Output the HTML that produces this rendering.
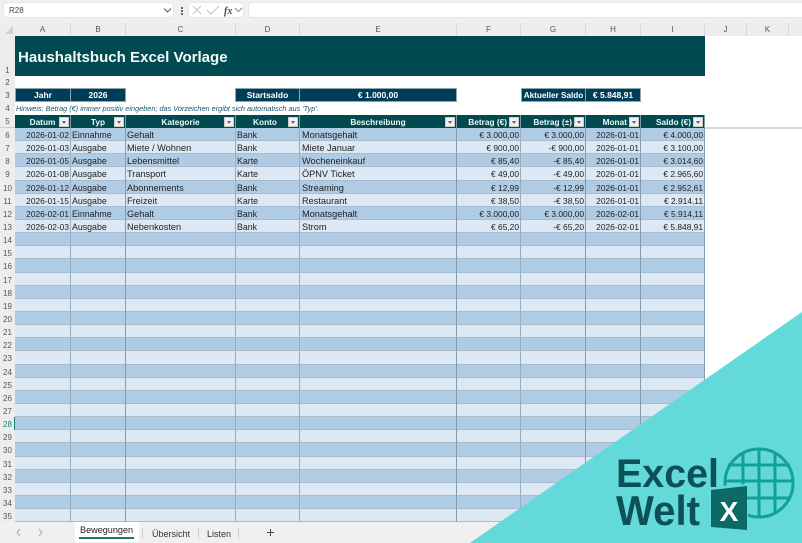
<!DOCTYPE html>
<html lang="de"><head><meta charset="utf-8"><title>Haushaltsbuch Excel Vorlage</title>
<style>
*{box-sizing:border-box}
html,body{margin:0;padding:0;background:#fff}
#p{position:relative;width:802px;height:543px;overflow:hidden;background:#fff;font-family:"Liberation Sans",sans-serif;color:#222;filter:blur(.3px)}
.abs{position:absolute}
.box{position:absolute;background:#fff;border-radius:4px;border:1px solid #e6e6e6}
.ch{position:absolute;top:23px;height:13px;background:#ededed;border-right:1px solid #d8d8d8;font-size:8px;line-height:14px;text-align:center;color:#555}
.rn{position:absolute;left:0;width:15px;text-align:center;font-size:8px;color:#555;background:#ededed}
.nv{position:absolute;background:#003d58;color:#fff;font-weight:bold;font-size:8.5px;text-align:center;border:1px solid #8fa3b0;line-height:13px}
.hd{position:absolute;top:115px;height:13px;background:#014a50;color:#f2f7f7;font-weight:bold;font-size:8.3px;line-height:14px;text-align:center;border-right:1px solid #7d9aa0}
.hd i{position:absolute;right:1px;top:1.5px;width:10px;height:10px;background:#f1f1f1;border:1px solid #ccc}
.hd i:after{content:"";position:absolute;left:2px;top:3px;border:2.2px solid transparent;border-top:3px solid #666;border-bottom:0}
#rows{position:absolute;left:0;top:128px;width:705px;height:394px;display:flex;flex-direction:column}
.r{flex:1;position:relative;font-size:8.4px;line-height:13px;white-space:nowrap;border-bottom:1px solid #a9bccd;margin-left:0}
.r>b{position:absolute;left:0;top:0;bottom:-1px;width:15px;background:#ededed;font-weight:normal;font-size:8px;line-height:15px;text-align:center;color:#555;z-index:2}
.o{background:#b0cbe4}.e{background:#dce8f3}
.r span{position:absolute;top:1px;color:#222}
.A{left:15px;width:54px;text-align:right}
.B{left:72px;font-size:8.8px}
.C{left:127px;font-size:9.2px}
.D{left:237px;font-size:8.8px}
.E{left:302px;font-size:9.2px}
.F{left:456px;width:63px;text-align:right}
.G{left:520px;width:64px;text-align:right}
.H{left:585px;width:54px;text-align:right}
.I{left:640px;width:63px;text-align:right}
.v{position:absolute;top:128px;height:394px;width:1px;background:#98aec0}
.tab{position:absolute;top:529px;font-size:9px;color:#333;line-height:11px}
.sep{position:absolute;top:528px;width:1px;height:11px;background:#ccc}
</style></head><body><div id="p">

<!-- toolbar -->
<div class="abs" style="left:0;top:0;width:802px;height:23px;background:#f0f0f0"></div>
<div class="box" style="left:3px;top:2px;width:171px;height:16px;font-size:8px;line-height:15px;padding-left:5px;color:#444">R28</div>
<svg class="abs" style="left:163px;top:7px" width="9" height="7"><path d="M1 1.5 L4.5 5 L8 1.5" fill="none" stroke="#555" stroke-width="1"/></svg>
<div class="abs" style="left:181px;top:7px;width:2px;height:2px;background:#666;box-shadow:0 3px 0 #666,0 6px 0 #666"></div>
<div class="box" style="left:188px;top:2px;width:56px;height:16px"></div>
<svg class="abs" style="left:190px;top:3px" width="54" height="15">
<path d="M3 3 L11 11 M11 3 L3 11" stroke="#c4c4c4" stroke-width="1" fill="none"/>
<path d="M17 7 L21 11 L29 3" stroke="#c4c4c4" stroke-width="1" fill="none"/>
<text x="34" y="11" font-family="Liberation Serif,serif" font-style="italic" font-weight="bold" font-size="10" fill="#444">fx</text>
<path d="M45 5 L48.5 8.5 L52 5" stroke="#888" stroke-width="1" fill="none"/>
</svg>
<div class="box" style="left:248px;top:2px;width:556px;height:16px;border-radius:4px 0 0 4px"></div>

<!-- column headers -->
<div class="abs" style="left:0;top:23px;width:802px;height:13px;background:#ededed"></div>
<div class="abs" style="left:5px;top:26px;border:4px solid transparent;border-right-color:#d0d0d0;border-bottom-color:#d0d0d0"></div>
<div class="ch" style="left:15px;width:56px">A</div>
<div class="ch" style="left:71px;width:55px">B</div>
<div class="ch" style="left:126px;width:110px">C</div>
<div class="ch" style="left:236px;width:64px">D</div>
<div class="ch" style="left:300px;width:157px">E</div>
<div class="ch" style="left:457px;width:64px">F</div>
<div class="ch" style="left:521px;width:65px">G</div>
<div class="ch" style="left:586px;width:55px">H</div>
<div class="ch" style="left:641px;width:64px">I</div>
<div class="ch" style="left:705px;width:42px">J</div>
<div class="ch" style="left:747px;width:42px">K</div>

<!-- top row numbers -->
<div class="rn" style="top:36px;height:40px;line-height:70px">1</div>
<div class="rn" style="top:76px;height:12px;line-height:13px">2</div>
<div class="rn" style="top:88px;height:14px;line-height:15px">3</div>
<div class="rn" style="top:102px;height:13px;line-height:14px">4</div>
<div class="rn" style="top:115px;height:13px;line-height:14px">5</div>

<!-- title -->
<div class="abs" style="left:15px;top:36px;width:690px;height:40px;background:#014a50;color:#f4f9f9;font-weight:bold;font-size:15.05px;line-height:43px;padding-left:3px">Haushaltsbuch Excel Vorlage</div>

<!-- summary -->
<div class="nv" style="left:15px;top:88px;width:56px;height:14px">Jahr</div>
<div class="nv" style="left:70px;top:88px;width:56px;height:14px">2026</div>
<div class="nv" style="left:235px;top:88px;width:65px;height:14px">Startsaldo</div>
<div class="nv" style="left:299px;top:88px;width:158px;height:14px">€ 1.000,00</div>
<div class="nv" style="left:521px;top:88px;width:65px;height:14px;font-size:8.2px;white-space:nowrap">Aktueller Saldo</div>
<div class="nv" style="left:585px;top:88px;width:56px;height:14px">€ 5.848,91</div>

<div class="abs" style="left:16px;top:103px;font-size:7.32px;line-height:11px;font-style:italic;color:#1a5473;white-space:nowrap">Hinweis: Betrag (€) immer positiv eingeben; das Vorzeichen ergibt sich automatisch aus 'Typ'.</div>

<!-- table header -->
<div class="hd" style="left:15px;width:56px">Datum<i></i></div>
<div class="hd" style="left:71px;width:55px">Typ<i></i></div>
<div class="hd" style="left:126px;width:110px">Kategorie<i></i></div>
<div class="hd" style="left:236px;width:64px;padding-right:5px">Konto<i></i></div>
<div class="hd" style="left:300px;width:157px">Beschreibung<i></i></div>
<div class="hd" style="left:457px;width:64px;text-align:right;padding-right:13px">Betrag (€)<i></i></div>
<div class="hd" style="left:521px;width:65px;text-align:right;padding-right:13px">Betrag (±)<i></i></div>
<div class="hd" style="left:586px;width:55px;text-align:right;padding-right:13px">Monat<i></i></div>
<div class="hd" style="left:641px;width:64px;text-align:right;padding-right:13px">Saldo (€)<i></i></div>
<div class="abs" style="left:705px;top:127px;width:97px;height:2px;background:#d9d9d9"></div>
<div class="abs" style="left:0;top:127px;width:15px;height:1px;background:#cfcfcf"></div>

<!-- rows -->
<div id="rows">
<div class="r o"><b>6</b><span class="A">2026-01-02</span><span class="B">Einnahme</span><span class="C">Gehalt</span><span class="D">Bank</span><span class="E">Monatsgehalt</span><span class="F">€ 3.000,00</span><span class="G">€ 3.000,00</span><span class="H">2026-01-01</span><span class="I">€ 4.000,00</span></div>
<div class="r e"><b>7</b><span class="A">2026-01-03</span><span class="B">Ausgabe</span><span class="C">Miete / Wohnen</span><span class="D">Bank</span><span class="E">Miete Januar</span><span class="F">€ 900,00</span><span class="G">-€ 900,00</span><span class="H">2026-01-01</span><span class="I">€ 3.100,00</span></div>
<div class="r o"><b>8</b><span class="A">2026-01-05</span><span class="B">Ausgabe</span><span class="C">Lebensmittel</span><span class="D">Karte</span><span class="E">Wocheneinkauf</span><span class="F">€ 85,40</span><span class="G">-€ 85,40</span><span class="H">2026-01-01</span><span class="I">€ 3.014,60</span></div>
<div class="r e"><b>9</b><span class="A">2026-01-08</span><span class="B">Ausgabe</span><span class="C">Transport</span><span class="D">Karte</span><span class="E">ÖPNV Ticket</span><span class="F">€ 49,00</span><span class="G">-€ 49,00</span><span class="H">2026-01-01</span><span class="I">€ 2.965,60</span></div>
<div class="r o"><b>10</b><span class="A">2026-01-12</span><span class="B">Ausgabe</span><span class="C">Abonnements</span><span class="D">Bank</span><span class="E">Streaming</span><span class="F">€ 12,99</span><span class="G">-€ 12,99</span><span class="H">2026-01-01</span><span class="I">€ 2.952,61</span></div>
<div class="r e"><b>11</b><span class="A">2026-01-15</span><span class="B">Ausgabe</span><span class="C">Freizeit</span><span class="D">Karte</span><span class="E">Restaurant</span><span class="F">€ 38,50</span><span class="G">-€ 38,50</span><span class="H">2026-01-01</span><span class="I">€ 2.914,11</span></div>
<div class="r o"><b>12</b><span class="A">2026-02-01</span><span class="B">Einnahme</span><span class="C">Gehalt</span><span class="D">Bank</span><span class="E">Monatsgehalt</span><span class="F">€ 3.000,00</span><span class="G">€ 3.000,00</span><span class="H">2026-02-01</span><span class="I">€ 5.914,11</span></div>
<div class="r e"><b>13</b><span class="A">2026-02-03</span><span class="B">Ausgabe</span><span class="C">Nebenkosten</span><span class="D">Bank</span><span class="E">Strom</span><span class="F">€ 65,20</span><span class="G">-€ 65,20</span><span class="H">2026-02-01</span><span class="I">€ 5.848,91</span></div>
<div class="r o"><b>14</b></div><div class="r e"><b>15</b></div>
<div class="r o"><b>16</b></div><div class="r e"><b>17</b></div>
<div class="r o"><b>18</b></div><div class="r e"><b>19</b></div>
<div class="r o"><b>20</b></div><div class="r e"><b>21</b></div>
<div class="r o"><b>22</b></div><div class="r e"><b>23</b></div>
<div class="r o"><b>24</b></div><div class="r e"><b>25</b></div>
<div class="r o"><b>26</b></div><div class="r e"><b>27</b></div>
<div class="r o"><b style="color:#107c72;box-shadow:inset -1px 0 0 #107c72">28</b></div><div class="r e"><b>29</b></div>
<div class="r o"><b>30</b></div><div class="r e"><b>31</b></div>
<div class="r o"><b>32</b></div><div class="r e"><b>33</b></div>
<div class="r o"><b>34</b></div><div class="r e"><b>35</b></div>
</div>
<div class="v" style="left:70px"></div><div class="v" style="left:125px;background:#869bae"></div><div class="v" style="left:235px"></div><div class="v" style="left:299px"></div><div class="v" style="left:456px;background:#869bae"></div><div class="v" style="left:520px"></div><div class="v" style="left:585px;background:#869bae"></div><div class="v" style="left:640px;background:#869bae"></div><div class="v" style="left:704px;background:#869bae"></div>

<!-- sheet tabs -->
<div class="abs" style="left:0;top:522px;width:802px;height:21px;background:#f0f0f0"></div>
<svg class="abs" style="left:14px;top:527px" width="32" height="11"><path d="M6 2 L3 5.5 L6 9" fill="none" stroke="#aaa"/><path d="M25 2 L28 5.5 L25 9" fill="none" stroke="#aaa"/></svg>
<div class="abs" style="left:75px;top:522px;width:64px;height:20px;background:#fff"></div>
<div class="tab" style="left:80px;top:525px;font-size:9.1px;color:#222">Bewegungen</div>
<div class="abs" style="left:79px;top:537px;width:55px;height:1.5px;background:#1c7c54"></div>
<div class="sep" style="left:142px"></div>
<div class="tab" style="left:152px">Übersicht</div>
<div class="sep" style="left:198px"></div>
<div class="tab" style="left:207px">Listen</div>
<div class="sep" style="left:238px"></div>
<svg class="abs" style="left:266px;top:528px" width="9" height="9"><path d="M4.5 1 V8 M1 4.5 H8" stroke="#444" fill="none"/></svg>

<!-- logo -->
<svg class="abs" style="left:0;top:0" width="802" height="543" viewBox="0 0 802 543">
<polygon points="470,543 802,312 802,543" fill="#63d9d9"/>
<g fill="none" stroke="#12a09a" stroke-width="3">
<circle cx="759" cy="483" r="34"/>
<path d="M759 449 V517 M743 453 V513 M775 453 V513 M728 465 H790 M725 481 H793 M727 498 H791"/>
</g>
<polygon points="708,487 746,484 749,532 708,529" fill="#63d9d9"/>
<polygon points="711,490 747,486 747,530 711,527" fill="#0b6966"/>
<text x="729" y="521" text-anchor="middle" font-family="Liberation Sans,sans-serif" font-weight="bold" font-size="28" fill="#fff">X</text>
<text x="616" y="487" font-family="Liberation Sans,sans-serif" font-weight="bold" font-size="40" textLength="103" lengthAdjust="spacingAndGlyphs" fill="#0c5058">Excel</text>
<text x="616" y="525" font-family="Liberation Sans,sans-serif" font-weight="bold" font-size="42" textLength="84" lengthAdjust="spacingAndGlyphs" fill="#0c5058">Welt</text>
</svg>
</div></body></html>
